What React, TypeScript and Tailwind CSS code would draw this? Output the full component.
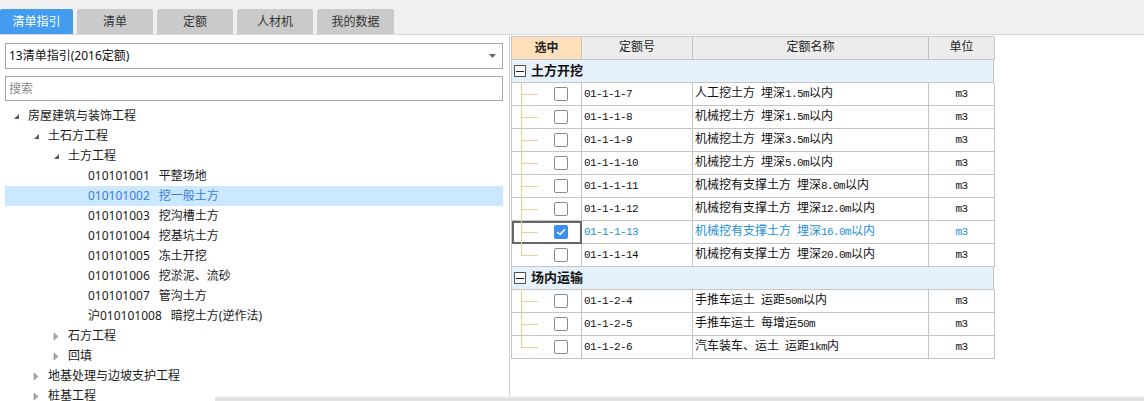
import React from 'react';

const treeFont = { fontFamily: '"Noto Sans", "Noto Sans CJK SC", sans-serif' };
const gridFont = { fontFamily: '"Liberation Mono", "Noto Sans CJK SC", monospace' };

type Node = { lvl: number; exp?: boolean; code?: string; text: string; sel?: boolean };

const tree: Node[] = [
  { lvl: 1, exp: true, text: '房屋建筑与装饰工程' },
  { lvl: 2, exp: true, text: '土石方工程' },
  { lvl: 3, exp: true, text: '土方工程' },
  { lvl: 4, code: '010101001', text: '平整场地' },
  { lvl: 4, code: '010101002', text: '挖一般土方', sel: true },
  { lvl: 4, code: '010101003', text: '挖沟槽土方' },
  { lvl: 4, code: '010101004', text: '挖基坑土方' },
  { lvl: 4, code: '010101005', text: '冻土开挖' },
  { lvl: 4, code: '010101006', text: '挖淤泥、流砂' },
  { lvl: 4, code: '010101007', text: '管沟土方' },
  { lvl: 4, code: '沪010101008', text: '暗挖土方(逆作法)' },
  { lvl: 3, exp: false, text: '石方工程' },
  { lvl: 3, exp: false, text: '回填' },
  { lvl: 2, exp: false, text: '地基处理与边坡支护工程' },
  { lvl: 2, exp: false, text: '桩基工程' },
];

type Quota = { no: string; name: string; checked?: boolean };
const groups: { title: string; rows: Quota[] }[] = [
  {
    title: '土方开挖',
    rows: [
      { no: '01-1-1-7', name: '人工挖土方 埋深1.5m以内' },
      { no: '01-1-1-8', name: '机械挖土方 埋深1.5m以内' },
      { no: '01-1-1-9', name: '机械挖土方 埋深3.5m以内' },
      { no: '01-1-1-10', name: '机械挖土方 埋深5.0m以内' },
      { no: '01-1-1-11', name: '机械挖有支撑土方 埋深8.0m以内' },
      { no: '01-1-1-12', name: '机械挖有支撑土方 埋深12.0m以内' },
      { no: '01-1-1-13', name: '机械挖有支撑土方 埋深16.0m以内', checked: true },
      { no: '01-1-1-14', name: '机械挖有支撑土方 埋深20.0m以内' },
    ],
  },
  {
    title: '场内运输',
    rows: [
      { no: '01-1-2-4', name: '手推车运土 运距50m以内' },
      { no: '01-1-2-5', name: '手推车运土 每增运50m' },
      { no: '01-1-2-6', name: '汽车装车、运土 运距1km内' },
    ],
  },
];

// ascii runs narrower, like a bitmap song font
function Mixed({ text }: { text: string }) {
  const parts = text.split(/([\x00-\x7F]+)/).filter(Boolean);
  return (
    <>
      {parts.map((p, i) =>
        /^[\x00-\x7F]+$/.test(p) ? (
          <span key={i} className="text-[11px] tracking-[-0.6px] whitespace-pre">{p}</span>
        ) : (
          <span key={i} className="text-[12px]">{p}</span>
        )
      )}
    </>
  );
}

function Caret({ open }: { open: boolean }) {
  return open ? (
    <svg width="7" height="7" viewBox="0 0 7 7">
      <path d="M6 1 L6 6 L1 6 Z" fill="#5a5a5a" />
    </svg>
  ) : (
    <svg width="6" height="9" viewBox="0 0 6 9">
      <path d="M1 1 L5 4.5 L1 8 Z" fill="#a8a8a8" stroke="#8a8a8a" strokeWidth="0.6" />
    </svg>
  );
}

function TreeRow({ n }: { n: Node }) {
  return (
    <div
      className={`flex items-center h-5 w-[498px] text-[12px] ${
        n.sel ? 'bg-[#cce8ff] text-[#3a7fd5]' : 'text-[#1a1a1a]'
      }`}
    >
      <div style={{ width: (n.lvl - 1) * 20 + 8 }} className="shrink-0" />
      <div className="w-[15px] shrink-0 flex items-center">
        {n.exp !== undefined && <Caret open={n.exp} />}
      </div>
      {n.code ? (
        <span className="whitespace-pre">
          {n.code}
          <span className="ml-[9px]">{n.text}</span>
        </span>
      ) : (
        <span>{n.text}</span>
      )}
    </div>
  );
}

const cols = 'grid grid-cols-[70px_111px_236px_66px]';

function Checkbox({ on }: { on?: boolean }) {
  if (on)
    return (
      <div className="w-[14px] h-[14px] rounded-[2px] bg-[#3b8ef0] flex items-center justify-center">
        <svg width="10" height="8" viewBox="0 0 10 8">
          <path d="M1 4 L4 6.5 L9 1.2" fill="none" stroke="#fff" strokeWidth="1.6" />
        </svg>
      </div>
    );
  return <div className="w-[14px] h-[14px] rounded-[2px] border border-[#8a8a8a] bg-white" />;
}

function QuotaRow({ q, last }: { q: Quota; last: boolean }) {
  const txt = q.checked ? 'text-[#2490d4]' : 'text-[#111]';
  return (
    <div className={`${cols} h-[23px] ${txt}`}>
      <div
        className={`relative flex items-center border-r border-b border-[#c4c4c4] ${
          q.checked ? 'outline-2 outline-[#666] -outline-offset-2' : ''
        }`}
      >
        <div
          className={`absolute left-[9px] -top-px w-px bg-[#eccf96] ${last ? 'h-[13px]' : 'h-[24px]'}`}
        />
        <div className="absolute left-[9px] top-[11px] w-[17px] h-px bg-[#eccf96]" />
        <div className="ml-[42px]">
          <Checkbox on={q.checked} />
        </div>
      </div>
      <div className="flex items-center pl-[2px] border-r border-b border-[#c4c4c4]">
        <Mixed text={q.no} />
      </div>
      <div className="flex items-center pl-[2px] border-r border-b border-[#c4c4c4] whitespace-nowrap overflow-hidden">
        <Mixed text={q.name} />
      </div>
      <div className="flex items-center justify-center border-r border-b border-[#c4c4c4]">
        <Mixed text="m3" />
      </div>
    </div>
  );
}

function GroupRow({ title }: { title: string }) {
  return (
    <div className="h-[23px] flex items-center bg-[#e5f2fc] border-r border-b border-[#c4c4c4]">
      <div className="ml-[2px] w-[12px] h-[12px] border border-[#555] bg-white flex items-center justify-center">
        <div className="w-[8px] h-px bg-[#222]" />
      </div>
      <span className="ml-[5px] text-[13px] font-bold text-[#111]" style={treeFont}>
        {title}
      </span>
    </div>
  );
}

export default function App() {
  const tabs = ['清单', '定额', '人材机', '我的数据'];
  return (
    <div className="relative w-[1144px] h-[401px] overflow-hidden bg-white" style={treeFont}>
      {/* tab bar */}
      <div className="h-[35px] bg-[#f0f0f0] border-b border-[#d9d9d9] pt-[9px] flex items-end gap-[4px]">
        <div className="h-[25px] w-[73px] rounded-t-[2px] bg-[#449cef] text-white text-[12px] flex items-center justify-center">
          清单指引
        </div>
        {tabs.map((t, i) => (
          <div
            key={t}
            className={`h-[25px] ${i === 3 ? 'w-[77px]' : 'w-[76px]'} rounded-t-[2px] bg-[#cacaca] text-[#333] text-[12px] flex items-center justify-center`}
          >
            {t}
          </div>
        ))}
      </div>

      <div className="flex h-[366px]">
        {/* left */}
        <div className="w-[510px] border-r border-[#cfcfcf] shrink-0">
          <div className="ml-[5px] mt-[8px] w-[498px] h-[26px] border border-[#a9a9a9] flex items-center justify-between pl-[3px] pr-[6px] text-[12px] text-[#111]">
            <span>13清单指引(2016定额)</span>
            <svg width="7" height="4" viewBox="0 0 7 4">
              <path d="M0 0 L7 0 L3.5 4 Z" fill="#666" />
            </svg>
          </div>
          <div className="ml-[5px] mt-[7px] w-[498px] h-[25px] border border-[#a9a9a9] flex items-center pl-[3px] text-[12px] text-[#8a8a8a]">
            搜索
          </div>
          <div className="mt-[5px] ml-[5px]">
            {tree.map((n, i) => (
              <TreeRow key={i} n={n} />
            ))}
          </div>
        </div>

        {/* right */}
        <div className="flex-1">
          <div className="ml-px mt-px w-[483px] border-l border-t border-[#c4c4c4]" style={gridFont}>
            <div className={`${cols} h-[23px] text-[#222]`}>
              <div className="flex items-center justify-center bg-[#fde0bb] border-r border-b border-[#c4c4c4] text-[12px] font-bold" style={treeFont}>
                选中
              </div>
              <div className="flex items-center justify-center bg-[#ececec] border-r border-b border-[#c4c4c4]">
                <Mixed text="定额号" />
              </div>
              <div className="flex items-center justify-center bg-[#ececec] border-r border-b border-[#c4c4c4]">
                <Mixed text="定额名称" />
              </div>
              <div className="flex items-center justify-center bg-[#ececec] border-r border-b border-[#c4c4c4]">
                <Mixed text="单位" />
              </div>
            </div>
            {groups.map((g) => (
              <div key={g.title}>
                <GroupRow title={g.title} />
                {g.rows.map((q, i) => (
                  <QuotaRow key={q.no} q={q} last={i === g.rows.length - 1} />
                ))}
              </div>
            ))}
          </div>
        </div>
      </div>

      {/* edge of a window peeking in at the bottom */}
      <div className="absolute left-[215px] right-0 top-[396px] h-[6px] bg-gradient-to-b from-[#f6f6f6] via-[#dcdcdc] to-[#e9e9e9] rounded-tl-[3px]" />
    </div>
  );
}
